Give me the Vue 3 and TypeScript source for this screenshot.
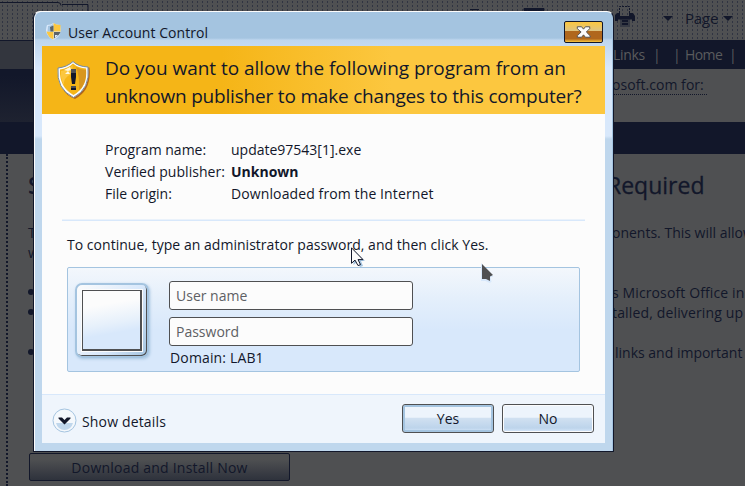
<script setup lang="ts">
import { ref } from 'vue'

interface Detail {
  label: string
  value: string
  strong?: boolean
  labelClass: string
  valueClass: string
}

const details: Detail[] = [
  { label: 'Program name:', value: 'update97543[1].exe', labelClass: 'l1', valueClass: 'v1' },
  { label: 'Verified publisher:', value: 'Unknown', strong: true, labelClass: 'l2', valueClass: 'v2' },
  { label: 'File origin:', value: 'Downloaded from the Internet', labelClass: 'l3', valueClass: 'v3' },
]

const userName = ref('')
const password = ref('')
</script>

<template>
  <div class="screen">
    <div class="page">
      <div class="toolbar">
        <svg class="tabs" width="614" height="41" viewBox="0 0 614 41">
          <path d="M0 2.500h58q3 0 3 3M62 4.500h26v7" fill="none" stroke="#12172a" />
          <path d="M470 9.500h9M524 8.500h20v2h-20z" stroke="#12172a" fill="#12172a" />
        </svg>
        <svg class="printer" width="22" height="22" viewBox="0 0 22 22">
          <path d="M5.500 7V.5h10V7" fill="none" stroke="#12172a" stroke-dasharray="2 1" />
          <path d="M3 7h3v3h9V7h4l2 3v5h-3v-3H4v3H1V9z" fill="#12172a" />
          <path d="M6 13h10v8H6z" fill="#363a44" />
          <path d="M8 15h6M8 18h6" stroke="#12172a" stroke-width="2" />
          <path d="M3 12.500h15" stroke="#12172a" stroke-width="2" />
        </svg>
        <span class="caret first"></span>
        <span class="page-label">Page</span>
        <span class="caret"></span>
      </div>
      <div class="nav">
        <span class="links">Links</span><span class="bar b1">|</span><span class="bar b2">|</span>
        <span class="home">Home</span><span class="bar b3">|</span>
      </div>
      <div class="search">
        <div class="search-left"></div>
        <div class="search-main"><span class="search-text">osoft.com for:</span></div>
      </div>
      <div class="strip"></div>
      <div class="article">
        <div class="gutter"></div>
        <div class="copy">
          <div class="line heading"><span>S</span><span class="tail">Required</span></div>
          <div class="line p1"><span>T</span><span class="tail t1">onents. This will allow</span></div>
          <div class="line p2"><span>w</span></div>
          <div class="line li1"><i class="dot"></i><span class="tail t2">s Microsoft Office in</span></div>
          <div class="line li2"><i class="dot"></i><span class="tail t3">talled, delivering up</span></div>
          <div class="line li3"><i class="dot"></i><span class="tail t4">links and important</span></div>
          <button class="download"><span>Download and Install Now</span></button>
        </div>
      </div>
    </div>

    <section class="dialog">
      <header class="titlebar">
        <svg class="small-shield" width="17" height="19" viewBox="0 0 17 19">
          <path d="M8.500 1Q11 3 15 3q2 8-2 12l-4.500 3Q4 16 2 12 0 8 2 3q4 0 6.500-2z" fill="#d8e8fb" />
          <path d="M8.500 1Q11 3 15.500 3v6.500h-7zM1.500 9.500h7v8Q3 15.500 1.500 9.500z" fill="#fcc73f" />
          <path d="M3 4q3 0 5-2v7.500H2.500z" fill="#a4c4e0" />
          <path d="M5 5l3.500-1.500v6h-3zM9 10h6.500q-1 3-6.500 6.500z" fill="#5c6469" />
          <path d="M10 13l3 0-3 3z" fill="#d8e8fb" />
        </svg>
        <span class="title">User Account Control</span>
        <button class="close" aria-label="Close">
          <svg width="38" height="21" viewBox="0 0 38 21">
            <path d="M12.500 5h4.500l2 2.500L21 5h4.500v2L22 10.500l4 4V16h-5l-2-2.500L17 16h-4.500v-1.500l4-4-4-3.500z" fill="#fcfcfc" stroke="#4f5052" />
          </svg>
        </button>
      </header>

      <div class="body">
        <div class="banner">
          <svg class="shield" width="34" height="40" viewBox="0 0 34 40">
            <path d="M17 2Q22 7 32.500 7.500 35 30 18 39 0 32 2 8q9-1 15-6z" fill="#b0671c" />
            <path d="M16 1.500Q21 6.500 31 7 33.500 29 16.500 37.500-1 29 1 8q9-1 15-6.500z" fill="#fcfcfc" stroke="#778b9f" />
            <path d="M16 3.500Q21 8 29 8.500 31 27 16.500 35 2 27 3 9.500q8-1 13-6z" fill="#f5b517" />
            <path d="M19 7q5 3 10 3 1 14-7 20Q23 17 19 7z" fill="#c78624" opacity=".65" />
            <path d="M4 11q7-1 12-6l-2 9Q6 18 7 25 3 18 4 11z" fill="#fcc73f" />
            <path d="M7 10l6-3 1 3-3 1zM8 14l3-3 2 3z" fill="#fff8df" />
            <path d="M14 9h5v8l-1 7h-3l-1-7zM14 26h5v4h-5z" fill="#12172a" />
            <path d="M14 9h5v4h-5zM14 26h5v2h-5z" fill="#4f5052" />
          </svg>
          <h1><span class="h-one">Do you want to allow the following program from an</span><span class="h-two">unknown publisher to make changes to this computer?</span></h1>
        </div>

        <dl class="details">
          <div v-for="row in details" :key="row.label" class="detail">
            <dt><span :class="row.labelClass">{{ row.label }}</span></dt>
            <dd><span :class="[row.valueClass, { strong: row.strong }]">{{ row.value }}</span></dd>
          </div>
        </dl>
        <div class="rule"></div>
        <p class="prompt"><span>To continue, type an administrator password, and then click Yes.</span></p>

        <div class="credentials">
          <div class="avatar"><div class="picture"></div></div>
          <div class="fields">
            <input v-model="userName" class="user" placeholder="User name">
            <input v-model="password" class="pass" type="password" placeholder="Password">
            <span class="domain">Domain: LAB1</span>
          </div>
        </div>

        <footer class="footer">
          <svg class="expander" width="25" height="25" viewBox="0 0 25 25">
            <circle cx="12.500" cy="12.500" r="11.500" fill="#f4f8fc" stroke="#a4c4e0" />
            <path d="M4 15h17q-2 7-8.500 7T4 15z" fill="#c0d7ec" />
            <path d="M6.500 9.500H10l2.500 2.500L15 9.500h3.500v1l-6 6-6-6z" fill="#12172a" />
          </svg>
          <span class="show">Show details</span>
          <button class="btn yes"><span>Yes</span></button>
          <button class="btn no"><span>No</span></button>
        </footer>
      </div>
    </section>

    <svg class="cursor light" width="15" height="20" viewBox="0 0 15 20">
      <path d="M2.500 3v15l3.500-3 3 5 3-1-2-5h4z" fill="#a4c4e0" />
      <path d="M.5 .8v15.500l3.500-3.200 3 5.500 2.500-1-2.500-5H12z" fill="#fcfcfc" stroke="#12172a" />
    </svg>
    <svg class="cursor dark" width="15" height="20" viewBox="0 0 15 20">
      <path d="M0 0v18h4.500l4 2 2-1-1-5h3z" fill="#d8e8fb" />
      <path d="M1 1l11 11-3 1.500V18l-4-2H1z" fill="#4f5052" />
    </svg>
  </div>
</template>

<style>
body { margin: 0; overflow: hidden; }
</style>

<style scoped>
* { box-sizing: border-box; }
.screen { position: relative; width: 745px; height: 486px; overflow: hidden; font-family: "Open Sans", "Noto Sans", sans-serif; font-size: 14px; color: #12172a; }
span { white-space: nowrap; }
button { font-family: inherit; font-size: inherit; color: inherit; padding: 0; margin: 0; }

.page { width: 745px; height: 486px; background: #4f5052; }
.toolbar { display: flex; align-items: center; height: 41px; background-color: #4f5052; background-image: radial-gradient(circle, #303442 .6px, transparent .7px); background-size: 5px 4px; border-bottom: 1px solid #12172a; }
.tabs { flex: none; }
.printer { margin-top: -6px; }
.caret { border: 5px solid transparent; border-top-color: #12172a; border-bottom: 0; }
.caret.first { margin: -4px 12px 0 27px; }
.caret:last-child { margin: -4px 0 0 4px; }
.page-label { width: 34px; font-size: 15px; letter-spacing: -.2px; margin-top: -4px; }
.nav { display: flex; align-items: center; height: 28px; padding-left: 613px; background: linear-gradient(90deg, #33363e 34px, #12172a 34px); color: #5a5b5d; line-height: 28px; }
.links { width: 32px; letter-spacing: -.3px; }
.bar { width: 4px; }
.b1 { margin-left: 8px; }
.b2 { margin-left: 16px; }
.home { margin-left: 8px; width: 38px; letter-spacing: -.6px; }
.b3 { margin-left: 6px; }
.search { display: flex; height: 53px; }
.search-left { width: 34px; background: linear-gradient(#12172a 12%, #1e2230); }
.search-main { flex: 1; padding: 6px 0 0 578px; }
.search-text { display: inline-block; width: 95px; height: 19px; line-height: 18px; border-bottom: 1px dotted #12172a; letter-spacing: .05px; }
.strip { height: 32px; background: #12172a; }
.article { display: flex; height: 332px; }
.gutter { width: 8px; border-right: 2px dotted #12172a; }
.copy { flex: 1; padding-left: 20px; }
.line { display: flex; align-items: center; height: 20px; }
.tail { margin-left: auto; width: 133px; }
.t2 { letter-spacing: .12px; }
.t3 { letter-spacing: .15px; }
.heading { height: 62px; font-size: 23px; font-weight: 600; }
.heading .tail { width: 138px; font-weight: 400; -webkit-text-stroke: .3px #12172a; }
.p1 { margin-top: 6px; }
.p2 { height: 20px; }
.li1 { margin-top: 20px; }
.li3 { margin-top: 20px; }
.li3 .tail { width: 130px; }
.dot { width: 6px; height: 6px; border-radius: 50%; background: #12172a; }
.download { display: block; width: 261px; height: 28px; margin: 91px 0 0 1px; border: 1px solid #12172a; border-radius: 2px; background: linear-gradient(#4f5052 20%, #2e323c); line-height: 25px; letter-spacing: .22px; }

.dialog { position: absolute; left: 33px; top: 11px; width: 581px; height: 441px; padding: 1px 7px 7px; border: 1px solid #12172a; border-top-color: #fcfcfc; border-radius: 7px 7px 1px 1px; background: linear-gradient(#a4c4e0 0 26px, #bed6ee 28px, #d8e8fb 56px 124px, #bfd7ed 127px); box-shadow: inset 1px 0 #fcfcfc, inset -1px 0 #a4c4e0; }
.titlebar { display: flex; align-items: flex-start; height: 33px; padding: 8px 3px 0 4px; }
.small-shield { margin-top: 1px; }
.title { margin-left: 6px; line-height: 24px; letter-spacing: .05px; }
.close { margin-left: auto; width: 39px; height: 22px; border: 1px solid #12172a; border-radius: 2px; background: linear-gradient(#fcc73f 0, #ddc481 44%, #b0671c 45% 84%, #fcc73f); }
.close svg { display: block; width: 37px; height: 20px; }

.body { width: 563px; height: 397px; margin-left: 1px; background: #fcfcfc; overflow: hidden; }
.banner { display: flex; height: 68px; padding: 14px 0 0 15px; background: linear-gradient(90deg, #f5b517 32%, #fcc73f 62%); }
h1 { display: flex; flex-direction: column; margin: -6px 0 0 14px; font-size: 19px; font-weight: 400; line-height: 28px; }
.h-one { letter-spacing: -.03px; }
.h-two { letter-spacing: -.19px; }
.details { margin: 25px 0 0 63px; }
.detail { display: flex; height: 22px; line-height: 22px; }
dt { width: 126px; }
dd { margin: 0; }
.l2 { letter-spacing: .05px; }
.v3 { letter-spacing: .11px; }
.strong { font-weight: 700; }
.rule { height: 2px; margin: 14px 20px 0 20px; background: linear-gradient(#eaf2fb 1px, #d8e8fb 1px); }
.prompt { height: 24px; margin: 12px 0 0 25px; line-height: 24px; letter-spacing: .03px; }
.credentials { display: flex; width: 513px; height: 105px; margin: 10px 0 0 25px; padding: 13px 0 0 7px; border: 1px solid #a4c4e0; border-radius: 2px; background: linear-gradient(#f3f7fc 0, #e4effb 30%, #d8e8fb 60%); }
.avatar { width: 74px; height: 75px; padding: 5px; margin-top: 2px; border: 2px solid #a4c4e0; border-radius: 7px; background: linear-gradient(120deg, #fcfcfc, #d8e8fb 60%, #a4c4e0); box-shadow: 1px 1px 3px #a4c4e0, inset -1px -1px #4f5052; }
.picture { height: 61px; width: 60px; border: 1px solid #4f5052; border-right-width: 2px; border-bottom-width: 2px; background: linear-gradient(170deg, #fcfcfc 25%, #e6f0fb 55%, #d8e8fb 70%); outline: 1px solid #fcfcfc; }
.fields { display: flex; flex-direction: column; margin-left: 20px; }
input { width: 244px; height: 29px; margin: 0 0 7px; padding: 0 6px; border: 1px solid #4f5052; border-radius: 3px; background: #fcfcfc; font: inherit; }
input::placeholder { color: #5e6064; opacity: 1; }
.domain { line-height: 20px; margin: -5px 0 0 1px; letter-spacing: .15px; }
.footer { display: flex; height: 50px; margin-top: 22px; padding: 9px 11px 0 10px; background: #eff5fc; border-top: 1px solid #d8e8fb; }
.expander { margin-top: 4px; }
.show { width: 90px; margin: 6px 0 0 5px; line-height: 24px; letter-spacing: .16px; }
.btn { width: 92px; height: 29px; border: 1px solid #4f5052; border-radius: 3px; background: linear-gradient(#edf4fc 45%, #d0e0f1 50%, #bdd4eb 85%, #d8e8fb); box-shadow: inset 0 0 0 1px #fcfcfc; line-height: 25px; }
.yes { margin-left: auto; box-shadow: inset 0 0 0 2px #a4c4e0; }
.no { margin-left: 8px; }

.cursor { position: absolute; }
.light { left: 351px; top: 247px; }
.dark { left: 481px; top: 263px; }
</style>
